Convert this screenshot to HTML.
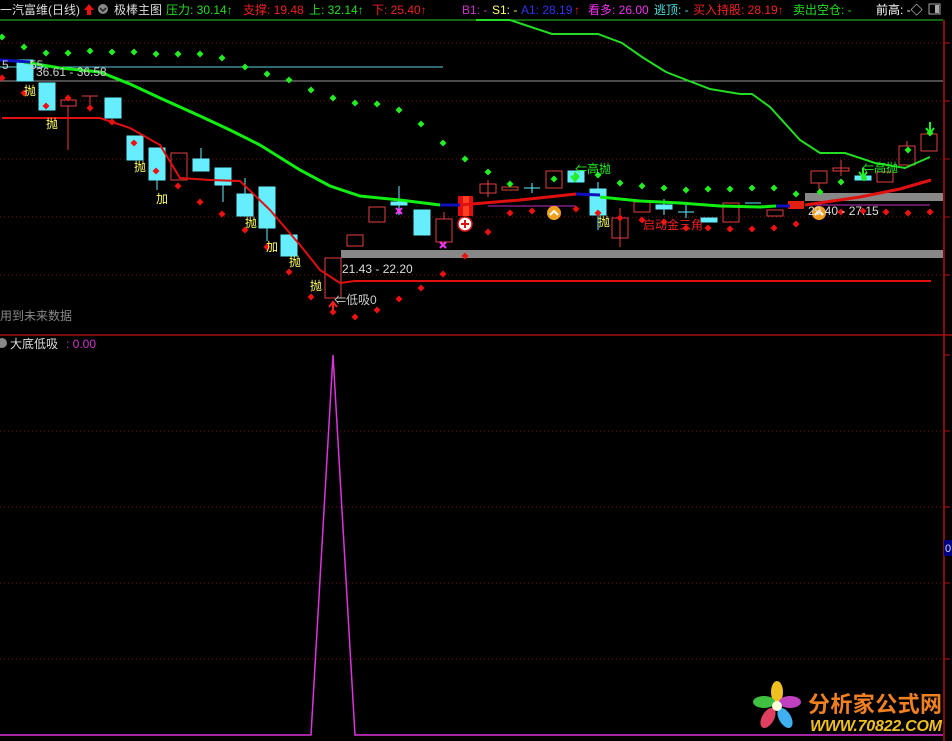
<!DOCTYPE html>
<html><head><meta charset="utf-8"><style>
html,body{margin:0;padding:0;background:#000;width:952px;height:741px;overflow:hidden}
svg{display:block}
text{font-family:"Liberation Sans","Noto Sans CJK SC",sans-serif}
</style></head><body>
<svg width="952" height="741" viewBox="0 0 952 741" xmlns="http://www.w3.org/2000/svg">
<defs>
<marker id="d" viewBox="-4 -4 8 8" markerWidth="8" markerHeight="8" markerUnits="userSpaceOnUse"><path d="M0-3.5L3.5 0 0 3.5-3.5 0z" fill="context-stroke"/></marker>
</defs>
<rect width="952" height="741" fill="#000"/>
<g stroke="#7a1010" stroke-dasharray="1,3" stroke-width="1">
<line x1="0" y1="43" x2="943" y2="43"/><line x1="0" y1="101" x2="943" y2="101"/>
<line x1="0" y1="159" x2="943" y2="159"/><line x1="0" y1="217" x2="943" y2="217"/>
<line x1="0" y1="275" x2="943" y2="275"/>
<line x1="0" y1="431" x2="943" y2="431"/><line x1="0" y1="507" x2="943" y2="507"/>
<line x1="0" y1="583" x2="943" y2="583"/><line x1="0" y1="659" x2="943" y2="659"/>
</g>
<line x1="0" y1="20" x2="943" y2="20" stroke="#22cc22" stroke-width="1"/>
<line x1="0" y1="335" x2="952" y2="335" stroke="#a01010" stroke-width="1.5"/>
<line x1="944" y1="20" x2="944" y2="741" stroke="#b01010" stroke-width="1.5"/>
<g stroke="#b01010"><line x1="944" y1="43" x2="950" y2="43"/><line x1="944" y1="101" x2="950" y2="101"/><line x1="944" y1="159" x2="950" y2="159"/><line x1="944" y1="217" x2="950" y2="217"/><line x1="944" y1="275" x2="950" y2="275"/><line x1="944" y1="355" x2="950" y2="355"/><line x1="944" y1="431" x2="950" y2="431"/><line x1="944" y1="507" x2="950" y2="507"/><line x1="944" y1="583" x2="950" y2="583"/><line x1="944" y1="659" x2="950" y2="659"/></g>
<rect x="944" y="540" width="8" height="16" fill="#000080"/><text x="945" y="552" font-size="11" fill="#ddd">0</text>
<line x1="0" y1="67" x2="443" y2="67" stroke="#5fd0e0"/>
<line x1="0" y1="81" x2="943" y2="81" stroke="#999"/>
<rect x="341" y="250" width="602" height="8" fill="#888"/>
<rect x="805" y="193" width="138" height="8" fill="#888"/>
<line x1="355" y1="281" x2="931" y2="281" stroke="#e01010" stroke-width="2"/>
<line x1="488" y1="206" x2="576" y2="206" stroke="#c030c0"/>
<line x1="808" y1="205" x2="930" y2="205" stroke="#c030c0"/>
<g fill="#66eeff" stroke="#66eeff">
<rect x="17" y="60" width="16" height="21"/><rect x="39" y="83" width="16" height="27"/>
<rect x="105" y="98" width="16" height="20"/><rect x="127" y="136" width="16" height="24"/>
<rect x="149" y="148" width="16" height="32"/><line x1="157" y1="180" x2="157" y2="190"/>
<rect x="193" y="159" width="16" height="12"/><line x1="201" y1="148" x2="201" y2="159"/>
<rect x="215" y="168" width="16" height="17"/><line x1="223" y1="185" x2="223" y2="202"/>
<rect x="237" y="194" width="16" height="22"/><line x1="245" y1="178" x2="245" y2="194"/>
<rect x="259" y="187" width="16" height="41"/><line x1="267" y1="228" x2="267" y2="241"/>
<rect x="281" y="235" width="16" height="21"/>
<rect x="391" y="202" width="16" height="3"/><line x1="399" y1="186" x2="399" y2="215"/>
<rect x="414" y="210" width="16" height="25"/>
<line x1="524" y1="188" x2="540" y2="188"/><line x1="532" y1="183" x2="532" y2="193"/>
<rect x="568" y="171" width="16" height="11"/>
<rect x="590" y="189" width="16" height="26"/><line x1="598" y1="182" x2="598" y2="230"/>
<rect x="656" y="205" width="16" height="4"/><line x1="664" y1="199" x2="664" y2="215"/>
<line x1="678" y1="212" x2="694" y2="212"/><line x1="686" y1="205" x2="686" y2="218"/>
<rect x="701" y="218" width="16" height="4"/>
<line x1="745" y1="203" x2="761" y2="203"/>
<rect x="855" y="176" width="16" height="4"/>
</g>
<g fill="none" stroke="#e04040">
<rect x="61" y="100" width="15" height="6"/><line x1="68" y1="95" x2="68" y2="100"/><line x1="68" y1="106" x2="68" y2="150"/>
<line x1="82" y1="96" x2="98" y2="96"/><line x1="90" y1="96" x2="90" y2="108"/>
<rect x="171" y="153" width="16" height="27"/>
<rect x="325" y="258" width="16" height="40"/>
<rect x="347" y="235" width="16" height="11"/>
<rect x="369" y="207" width="16" height="15"/>
<rect x="436" y="219" width="16" height="23"/><line x1="444" y1="212" x2="444" y2="219"/>
<rect x="480" y="184" width="16" height="9"/><line x1="488" y1="180" x2="488" y2="197"/>
<rect x="502" y="187" width="16" height="3"/>
<rect x="546" y="171" width="16" height="17"/>
<rect x="612" y="218" width="16" height="20"/><line x1="620" y1="208" x2="620" y2="247"/>
<rect x="634" y="202" width="16" height="10"/>
<rect x="723" y="203" width="16" height="19"/>
<rect x="767" y="210" width="16" height="6"/>
<rect x="811" y="171" width="16" height="12"/><line x1="819" y1="183" x2="819" y2="190"/>
<rect x="833" y="168" width="16" height="3"/><line x1="841" y1="160" x2="841" y2="176"/>
<rect x="877" y="172" width="16" height="10"/>
<rect x="899" y="146" width="16" height="19"/><line x1="907" y1="141" x2="907" y2="146"/>
<rect x="921" y="134" width="16" height="17"/>
</g>
<rect x="458" y="196" width="15" height="20" fill="#e01010"/><rect x="463" y="196" width="6" height="20" fill="#ff4020"/>
<rect x="788" y="201" width="16" height="8" fill="#e02010"/>
<polyline fill="none" stroke="#11ee11" stroke-width="3" points="24,62 60,68 100,72 130,84 160,98 200,116 230,130 260,145 300,170 330,186 360,196 400,200 440,205"/>
<polyline fill="none" stroke="#1010c0" stroke-width="3" points="0,60 30,62"/>
<polyline fill="none" stroke="#1010c0" stroke-width="3" points="440,205 460,205"/>
<polyline fill="none" stroke="#e01010" stroke-width="3" points="460,205 520,200 576,194"/>
<polyline fill="none" stroke="#1010c0" stroke-width="3" points="576,194 600,195"/>
<polyline fill="none" stroke="#11ee11" stroke-width="3" points="600,197 640,201 680,203 720,206 760,207 776,206"/>
<polyline fill="none" stroke="#1010c0" stroke-width="3" points="776,206 790,206"/>
<polyline fill="none" stroke="#e01010" stroke-width="3" points="805,205 860,197 900,189 931,180"/>
<polyline fill="none" stroke="#22dd22" stroke-width="2" points="476,20 510,20 552,34 598,34 622,43 642,57 666,72 710,89 740,94 752,94 770,107 800,140 820,153 845,153 875,163 905,168 930,157"/>
<polyline fill="none" stroke="#e01010" stroke-width="2" points="2,118 100,118 130,128 160,145 180,178 210,180 240,181 270,210 300,245 320,270 340,283 355,281"/>
<polyline fill="none" stroke="#22ee22" stroke-width="0" marker-start="url(#d)" marker-mid="url(#d)" marker-end="url(#d)" style="stroke:#22ee22;stroke-width:0.01" points="2,37 24,47 46,53 68,53 90,51 112,52 134,52 156,54 178,54 200,54 222,58 245,67 267,74 289,80 311,90 333,98 355,103 377,104 399,110 421,124 443,143 465,159 488,172 510,184 554,179 576,176 598,175 620,183 642,186 664,188 686,190 708,189 730,189 752,188 774,188 796,194 820,192 841,182 864,178 908,150 930,133"/>
<polyline fill="none" marker-start="url(#d)" marker-mid="url(#d)" marker-end="url(#d)" style="stroke:#ee1111;stroke-width:0.01" points="2,78 24,93 46,106 68,98 90,108 112,122 134,143 156,171 178,186 200,202 222,214 245,230 267,247 289,272 311,297 333,312 355,317 377,310 399,299 421,288 443,274 465,256 488,232 510,213 532,211 554,213 576,209 598,213 620,218 642,220 664,222 686,228 708,228 730,229 752,229 774,228 796,224 841,212 863,211 886,212 908,213 930,212"/>
<circle cx="465" cy="224" r="7" fill="#fff" stroke="#e01010" stroke-width="1.5"/><path d="M461 224h8M465 220v8" stroke="#e01010" stroke-width="2"/>
<circle cx="554" cy="213" r="7" fill="#f0a020"/><path d="M550 215l4-4 4 4" stroke="#fff" stroke-width="2" fill="none"/>
<circle cx="819" cy="213" r="7" fill="#f0a020"/><path d="M815 215l4-4 4 4" stroke="#fff" stroke-width="2" fill="none"/>
<path d="M396 208l6 6M402 208l-6 6M440 242l6 6M446 242l-6 6" stroke="#ff33ff" stroke-width="2"/>
<path d="M333 303v8M329 307l4-5 4 5" stroke="#ff2020" stroke-width="2" fill="none"/>
<path d="M575 172v8M571 176l4 5 4-5" stroke="#22ee22" stroke-width="2" fill="none"/>
<path d="M863 168v8M859 172l4 5 4-5" stroke="#22ee22" stroke-width="2" fill="none"/>
<path d="M930 122v10M926 128l4 5 4-5" stroke="#22ee22" stroke-width="2" fill="none"/>
<g font-size="12">
<text x="24" y="95" fill="#ffff66">抛</text><text x="46" y="128" fill="#ffff66">抛</text>
<text x="134" y="171" fill="#ffff66">抛</text><text x="156" y="203" fill="#ffff66">加</text>
<text x="245" y="227" fill="#ffff66">抛</text><text x="266" y="251" fill="#ffff66">加</text>
<text x="289" y="266" fill="#ffff66">抛</text><text x="310" y="290" fill="#ffff66">抛</text>
<text x="598" y="226" fill="#ffff66">抛</text>
<text x="342" y="273" fill="#ddd">21.43 - 22.20</text>
<text x="334" y="304" fill="#ccc">⇐低吸0</text>
<text x="36" y="76" fill="#ccc">36.61 - 36.58</text>
<text x="2" y="69" fill="#ccc">5</text><text x="30" y="69" fill="#ccc">55</text>
<text x="808" y="215" fill="#ddd">29.40 - 27.15</text>
<text x="575" y="173" fill="#22ee22">⇐高抛</text>
<text x="862" y="172" fill="#22ee22">⇐高抛</text>
<text x="643" y="229" fill="#ee2222">启动金三角</text>
<text x="0" y="320" fill="#888">用到未来数据</text>
</g>
<g font-size="12">
<text x="0" y="14" fill="#ddd">一汽富维(日线)</text>
<path d="M89 4l-5 6h3v5h4v-5h3z" fill="#ee1111"/>
<circle cx="103" cy="9" r="5" fill="#888"/><path d="M100 8l3 3 3-3" stroke="#222" fill="none" stroke-width="1.5"/>
<text x="114" y="14" fill="#ddd">极棒主图</text>
<text x="166" y="14" fill="#22dd22">压力: 30.14↑</text>
<text x="243" y="14" fill="#ee2222">支撑: 19.48</text>
<text x="309" y="14" fill="#22dd22">上: 32.14↑</text>
<text x="372" y="14" fill="#ee2222">下: 25.40↑</text>
<text x="462" y="14" fill="#cc33cc">B1: -</text>
<text x="492" y="14" fill="#ffff66">S1: -</text>
<text x="521" y="14" fill="#3333ee">A1: 28.19</text><text x="574" y="14" fill="#ee2222">↑</text>
<text x="588" y="14" fill="#ee33ee">看多: 26.00</text>
<text x="654" y="14" fill="#55dddd">逃顶: -</text>
<text x="693" y="14" fill="#ee2222">买入持股: 28.19↑</text>
<text x="793" y="14" fill="#22dd22">卖出空仓: -</text>
<text x="876" y="14" fill="#fff">前高: -◇</text>
<rect x="929" y="4" width="11" height="10" fill="none" stroke="#aaa"/><rect x="935" y="5" width="4" height="8" fill="#aaa"/>
</g>
<circle cx="2" cy="343" r="5" fill="#888"/>
<text x="10" y="348" font-size="12" fill="#ddd">大底低吸</text>
<text x="66" y="348" font-size="12" fill="#cc33cc">: 0.00</text>
<polyline fill="none" stroke="#dd33dd" stroke-width="1.5" points="0,735 311,735 333,355 355,735 943,735"/>
<g transform="translate(777,706)">
<ellipse cx="0" cy="-14" rx="6" ry="11" fill="#f0c020"/>
<ellipse cx="13" cy="-4" rx="11" ry="6" fill="#c040c0"/>
<ellipse cx="8" cy="12" rx="6" ry="11" fill="#40b0f0" transform="rotate(-30 8 12)"/>
<ellipse cx="-9" cy="12" rx="6" ry="11" fill="#e04060" transform="rotate(30 -9 12)"/>
<ellipse cx="-13" cy="-4" rx="11" ry="6" fill="#40c040"/>
<circle cx="0" cy="0" r="5" fill="#ffd"/>
</g>
<text x="808" y="712" font-size="22" font-weight="bold" fill="#f08020" font-family="'Noto Sans CJK SC',sans-serif" textLength="134">分析家公式网</text>
<text x="810" y="731" font-size="16" font-weight="bold" font-style="italic" fill="#f0c020" textLength="132">WWW.70822.COM</text>
</svg>
</body></html>
